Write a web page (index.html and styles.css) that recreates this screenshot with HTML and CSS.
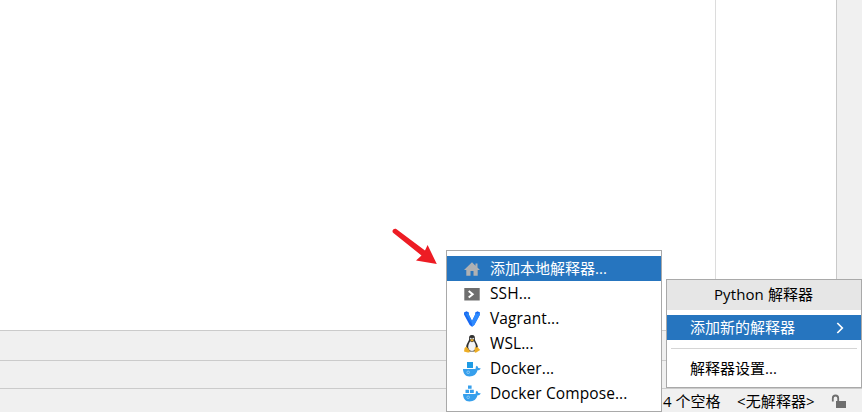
FILE: index.html
```html
<!DOCTYPE html>
<html lang="zh-CN">
<head>
<meta charset="utf-8">
<title>Python 解释器</title>
<link rel="stylesheet" href="styles.css">
</head>
<body>
<div class="ide">
  <div class="workspace"><div class="editor"></div><div class="margin"></div><div class="side"></div></div>
  <div class="strip tools"></div>
  <div class="strip tabs"></div>
  <footer class="strip status">
    <span class="indent">4 个空格</span><span class="interp">&lt;无解释器&gt;</span>
    <svg class="lock" width="16" height="16" viewBox="0 0 16 16"><path d="M1.8 7.5V4.2a2.7 2.7 0 0 1 5.4 0V8" fill="none" stroke="#6e6e6e" stroke-width="1.8"/><path d="M5 7h10v7H5z" fill="#6e6e6e"/></svg>
  </footer>
</div>
<svg class="arrow" width="50" height="42" viewBox="0 0 50 42"><path d="M3.4 7.1C1 5 3.8 1.6 6.6 3.2L35 24.6L37.6 19L46.8 38L26 34.6L31.5 29.6Z" fill="#ed1c24"/></svg>
<nav class="menu submenu">
  <div class="item selected"><svg class="icon" viewBox="0 0 16 16"><path d="M8 1.3L0 9h2.3v5.7h4.2V10h3v4.7h4.2V9H16l-2.5-2.4V2.5h-2v2.2z" fill="#afb1b3"/></svg><span>添加本地解释器...</span></div>
  <div class="item"><svg class="icon" viewBox="0 0 16 16"><path d="M.3 2h15.4v12.5H.3z" fill="#6e6e6e"/><path d="M4.7 5l4 3.3-4 3.3" fill="none" stroke="#fff" stroke-width="2"/></svg><span class="latin">SSH...</span></div>
  <div class="item"><svg class="icon" viewBox="0 0 16 16"><path d="M0 1.5L2.5.3l2.3 1.2v2L8 10l3.2-6.5v-2L13.5.3 16 1.5v2L10.3 14 8 15.8 5.7 14 0 3.5z" fill="#1868f2"/><path d="M11.2 1.7l2.3 1.1L16 1.5v2L10.3 14 8 15.8V10l3.2-6.5z" fill="#2e8aff"/><path d="M0 1.5l2.5 1.3 2.3-1.3v2L8 10v3L3 5z" fill="#2684f5"/></svg><span class="latin">Vagrant...</span></div>
  <div class="item"><svg class="icon tux" viewBox="0 0 16 18"><path d="M8 0C5.5 0 4.9 1.5 5.1 4 5.2 6 2.7 8 2.1 12l3.4 4.5h5L13.9 12C13.3 8 10.7 6 10.9 4 11.1 1.5 10.4 0 8 0z" fill="#303030"/><path d="M6.2 6.3L8 7.2l2-.9c1 2 2 3.5 1.8 6.2C11.2 15 9.8 16 8 16s-3.2-1-3.8-3.5c-.2-2.5 1-4.5 2-6.2z" fill="#f4f4f4"/><circle cx="6.8" cy="3.6" r=".9" fill="#ddd"/><circle cx="9.2" cy="3.6" r=".9" fill="#ddd"/><path d="M6 5.1l2-1 2 1-2 1.7zM2.3 11.6l3.5 4.2c.4 1.4-.7 2.1-2.1 1.6L0 16.4l.6-3.5zM11 11.8c.8 1 1.8 1 2.7 0l1 1.7 1.5 1.6-3.6 2.2c-1 .8-2.3.2-2.2-1.2z" fill="#eeae25"/></svg><span class="latin">WSL...</span></div>
  <div class="item"><svg class="icon docker" viewBox="0 0 18 16"><path d="M4 1h6v6H4z" fill="#1f9ce5"/><path d="M0 8h12c.8 0 1-.7.7-2l1-1.3c1 .6 1.4 1.3 1.5 2.2 1.2-.1 2 .1 2.6.6-.7 1.4-2 1.8-3.3 1.8C13.3 13.5 10.8 15.5 6.5 15.5 2.2 15.5 0 12 0 8z" fill="#369fec"/><circle cx="5.2" cy="11.3" r="1.3" fill="none" stroke="#a8d7f7" stroke-width=".7"/></svg><span class="latin">Docker...</span></div>
  <div class="item"><svg class="icon docker" viewBox="0 0 18 16"><path d="M5 -.5h3.6v3.3H5zM2.5 3.8h3.6V7H2.5zM7 3.8h3.8V7H7z" fill="#369fec"/><path d="M0 8h12c.8 0 1-.7.7-2l1-1.3c1 .6 1.4 1.3 1.5 2.2 1.2-.1 2 .1 2.6.6-.7 1.4-2 1.8-3.3 1.8C13.3 13.5 10.8 15.5 6.5 15.5 2.2 15.5 0 12 0 8z" fill="#369fec"/><circle cx="5.2" cy="11.3" r="1.3" fill="none" stroke="#a8d7f7" stroke-width=".7"/></svg><span class="latin">Docker Compose...</span></div>
</nav>
<nav class="menu main">
  <header class="title">Python 解释器</header>
  <div class="entry selected"><span>添加新的解释器</span><svg width="8" height="12" viewBox="0 0 8 12"><path d="M1.3 1l5 5-5 5" fill="none" stroke="#fff" stroke-width="1.7"/></svg></div>
  <hr>
  <div class="entry"><span>解释器设置...</span></div>
</nav>
</body>
</html>
```
FILE: styles.css
```css
* { box-sizing: border-box; }
body { margin: 0; overflow: hidden; font: 15px/25px "Open Sans", "Noto Sans CJK SC", sans-serif; color: #000; white-space: nowrap; }
.ide { width: 862px; height: 412px; display: flex; flex-direction: column; }
.workspace { height: 330px; display: flex; background: #fff; }
.editor { width: 715px; }
.margin { width: 122px; border: solid #c9c9c9; border-width: 0 1px; border-left-color: #dcdcdc; }
.side { flex: 1; background: #f0f0f0; }
.strip { background: #f0f0f0; border-top: 1px solid #cbcbcb; }
.tools { height: 30px; }
.tabs { height: 28px; }
.status { height: 24px; display: flex; align-items: center; padding-left: 663px; }
.indent { width: 74px; padding-top: 2px; }
.interp { width: 94px; padding-top: 2px; letter-spacing: .1px; }
.lock { flex: none; margin-top: 3px; }
.arrow { position: absolute; left: 390px; top: 226px; }
.menu { position: absolute; background: #fff; border: 1px solid #a9a9a9; }
.submenu { left: 446px; top: 250px; width: 216px; height: 162px; padding-top: 5px; }
.item { height: 25px; display: flex; align-items: center; padding-left: 17px; gap: 10px; }
.latin { font-size: 15.5px; letter-spacing: .1px; }
.icon { width: 16px; height: 16px; flex: none; overflow: visible; }
.tux { height: 18px; }
.docker { width: 18px; margin-left: -1px; margin-right: -1px; }
.selected { background: #2675bf; color: #fff; }
.main { left: 666px; top: 279px; width: 196px; height: 109px; }
.title { height: 30px; line-height: 29px; margin-bottom: 5px; padding-left: 47px; background: #e6e6e6; letter-spacing: .1px; }
.entry { height: 25px; display: flex; align-items: center; justify-content: space-between; padding: 0 17px 0 23px; }
hr { height: 1px; border: 0; margin: 8px 4px 7px; background: #d5d5d5; }
```
